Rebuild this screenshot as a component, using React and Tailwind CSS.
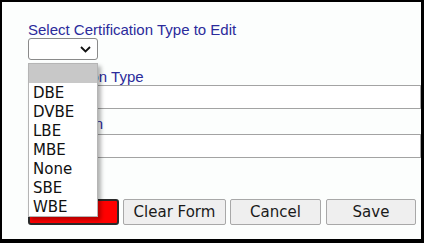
import React from 'react';
import { useState } from 'react';

const options = ['DBE', 'DVBE', 'LBE', 'MBE', 'None', 'SBE', 'WBE'];

export default function App() {
  const [open] = useState(true);

  return (
    <div className="w-[424px] h-[243px] bg-white">
      <div className="relative w-[424px] h-[243px] border-t-2 border-l-2 border-r-[3px] border-b-4 border-black bg-[#fcfefd] pl-[26px] pt-[19px]" style={{ fontFamily: '"Liberation Sans", Arial, sans-serif' }}>

        {/* heading + picker */}
        <div className="text-[15px] leading-[17px] text-[#2b2b9b]">Select Certification Type to Edit</div>
        <div className="relative w-[70px] h-[22px] border border-[#8a8a8a] rounded-[3px] bg-white">
          <svg className="absolute right-[6px] top-[7px]" width="11" height="7" viewBox="0 0 11 7">
            <path d="M1 1 L5.5 5.5 L10 1" fill="none" stroke="#111" strokeWidth="1.8" />
          </svg>
        </div>

        {/* form fields */}
        <div className="mt-[8px] text-[15px] leading-[17px] text-[#2b2b9b]">Certification Type</div>
        <input className="block w-[393px] h-[24px] border border-[#a3a3a3] bg-white outline-none" />
        <div className="mt-[6px] text-[15px] leading-[17px] text-[#2b2b9b]">Description</div>
        <input className="block mt-[2px] w-[393px] h-[24px] border border-[#a3a3a3] bg-white outline-none" />

        {/* buttons */}
        <div className="flex mt-[41px] gap-[4px] text-[15px] text-[#1a1a1a]" style={{ fontFamily: '"DejaVu Sans", Verdana, sans-serif' }}>
          <button className="w-[91px] h-[26px] bg-[#ff0000] border-2 border-[#2a2a2a] rounded-[3px] leading-none">Delete</button>
          <button className="w-[103px] h-[26px] bg-[#efefef] border border-[#a8a8a8] rounded-[2px] leading-none">Clear Form</button>
          <button className="w-[91px] h-[26px] bg-[#efefef] border border-[#a8a8a8] rounded-[2px] leading-none">Cancel</button>
          <button className="ml-[1px] w-[90px] h-[26px] bg-[#efefef] border border-[#a8a8a8] rounded-[2px] leading-none">Save</button>
        </div>

        {/* open dropdown list */}
        {open && (
          <div className="absolute left-[26px] top-[61px] w-[70px] bg-white border border-[#b5b5b5] shadow-[3px_3px_4px_rgba(0,0,0,0.3)] text-[15px] text-[#111]" style={{ fontFamily: '"DejaVu Sans", Verdana, sans-serif' }}>
            <div className="h-[19px] bg-[#c8c8c8]"></div>
            {options.map(opt => (
              <div key={opt} className="h-[19px] leading-[20px] pl-[4px]">{opt}</div>
            ))}
          </div>
        )}
      </div>
    </div>
  );
}
